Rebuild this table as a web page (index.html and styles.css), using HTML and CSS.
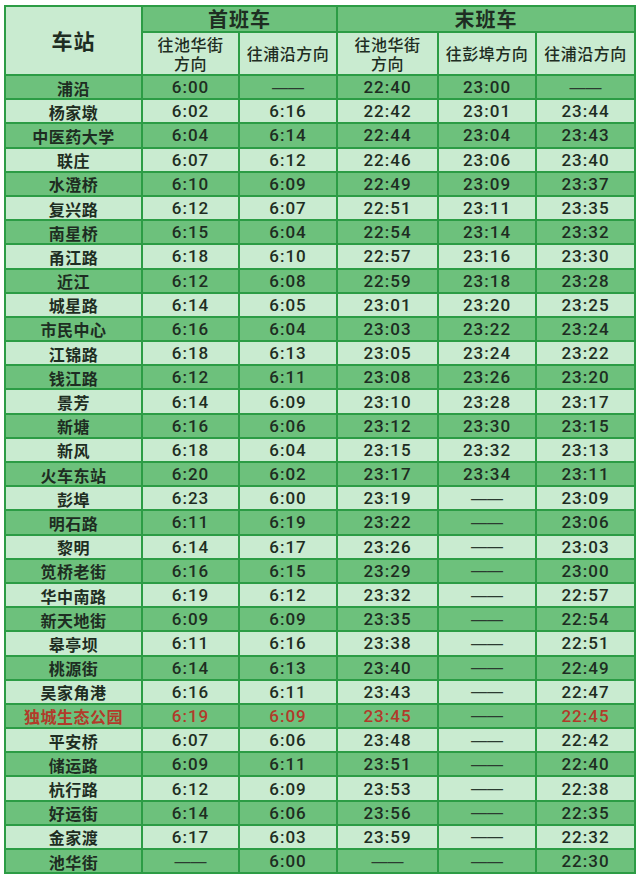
FILE: index.html
```html
<!DOCTYPE html>
<html lang="zh">
<head>
<meta charset="utf-8">
<link rel="stylesheet" href="styles.css">
</head>
<body>
<table class="tt">
  <colgroup>
    <col class="c-st"><col class="c-a"><col class="c-b"><col class="c-c"><col class="c-d"><col class="c-e">
  </colgroup>
  <thead>
    <tr class="h1">
      <th rowspan="2" class="station-h">车站</th>
      <th colspan="2" class="group">首班车</th>
      <th colspan="3" class="group">末班车</th>
    </tr>
    <tr class="h2">
      <th><span class="ln">往池华街</span><span class="ln">方向</span></th>
      <th>往浦沿方向</th>
      <th><span class="ln">往池华街</span><span class="ln">方向</span></th>
      <th>往彭埠方向</th>
      <th>往浦沿方向</th>
    </tr>
  </thead>
  <tbody>
    <tr><td class="st">浦沿</td><td>6:00</td><td class="dash">——</td><td>22:40</td><td>23:00</td><td class="dash">——</td></tr>
    <tr><td class="st">杨家墩</td><td>6:02</td><td>6:16</td><td>22:42</td><td>23:01</td><td>23:44</td></tr>
    <tr><td class="st">中医药大学</td><td>6:04</td><td>6:14</td><td>22:44</td><td>23:04</td><td>23:43</td></tr>
    <tr><td class="st">联庄</td><td>6:07</td><td>6:12</td><td>22:46</td><td>23:06</td><td>23:40</td></tr>
    <tr><td class="st">水澄桥</td><td>6:10</td><td>6:09</td><td>22:49</td><td>23:09</td><td>23:37</td></tr>
    <tr><td class="st">复兴路</td><td>6:12</td><td>6:07</td><td>22:51</td><td>23:11</td><td>23:35</td></tr>
    <tr><td class="st">南星桥</td><td>6:15</td><td>6:04</td><td>22:54</td><td>23:14</td><td>23:32</td></tr>
    <tr><td class="st">甬江路</td><td>6:18</td><td>6:10</td><td>22:57</td><td>23:16</td><td>23:30</td></tr>
    <tr><td class="st">近江</td><td>6:12</td><td>6:08</td><td>22:59</td><td>23:18</td><td>23:28</td></tr>
    <tr><td class="st">城星路</td><td>6:14</td><td>6:05</td><td>23:01</td><td>23:20</td><td>23:25</td></tr>
    <tr><td class="st">市民中心</td><td>6:16</td><td>6:04</td><td>23:03</td><td>23:22</td><td>23:24</td></tr>
    <tr><td class="st">江锦路</td><td>6:18</td><td>6:13</td><td>23:05</td><td>23:24</td><td>23:22</td></tr>
    <tr><td class="st">钱江路</td><td>6:12</td><td>6:11</td><td>23:08</td><td>23:26</td><td>23:20</td></tr>
    <tr><td class="st">景芳</td><td>6:14</td><td>6:09</td><td>23:10</td><td>23:28</td><td>23:17</td></tr>
    <tr><td class="st">新塘</td><td>6:16</td><td>6:06</td><td>23:12</td><td>23:30</td><td>23:15</td></tr>
    <tr><td class="st">新风</td><td>6:18</td><td>6:04</td><td>23:15</td><td>23:32</td><td>23:13</td></tr>
    <tr><td class="st">火车东站</td><td>6:20</td><td>6:02</td><td>23:17</td><td>23:34</td><td>23:11</td></tr>
    <tr><td class="st">彭埠</td><td>6:23</td><td>6:00</td><td>23:19</td><td class="dash">——</td><td>23:09</td></tr>
    <tr><td class="st">明石路</td><td>6:11</td><td>6:19</td><td>23:22</td><td class="dash">——</td><td>23:06</td></tr>
    <tr><td class="st">黎明</td><td>6:14</td><td>6:17</td><td>23:26</td><td class="dash">——</td><td>23:03</td></tr>
    <tr><td class="st">笕桥老街</td><td>6:16</td><td>6:15</td><td>23:29</td><td class="dash">——</td><td>23:00</td></tr>
    <tr><td class="st">华中南路</td><td>6:19</td><td>6:12</td><td>23:32</td><td class="dash">——</td><td>22:57</td></tr>
    <tr><td class="st">新天地街</td><td>6:09</td><td>6:09</td><td>23:35</td><td class="dash">——</td><td>22:54</td></tr>
    <tr><td class="st">皋亭坝</td><td>6:11</td><td>6:16</td><td>23:38</td><td class="dash">——</td><td>22:51</td></tr>
    <tr><td class="st">桃源街</td><td>6:14</td><td>6:13</td><td>23:40</td><td class="dash">——</td><td>22:49</td></tr>
    <tr><td class="st">吴家角港</td><td>6:16</td><td>6:11</td><td>23:43</td><td class="dash">——</td><td>22:47</td></tr>
    <tr class="hl"><td class="st">独城生态公园</td><td>6:19</td><td>6:09</td><td>23:45</td><td class="dash">——</td><td>22:45</td></tr>
    <tr><td class="st">平安桥</td><td>6:07</td><td>6:06</td><td>23:48</td><td class="dash">——</td><td>22:42</td></tr>
    <tr><td class="st">储运路</td><td>6:09</td><td>6:11</td><td>23:51</td><td class="dash">——</td><td>22:40</td></tr>
    <tr><td class="st">杭行路</td><td>6:12</td><td>6:09</td><td>23:53</td><td class="dash">——</td><td>22:38</td></tr>
    <tr><td class="st">好运街</td><td>6:14</td><td>6:06</td><td>23:56</td><td class="dash">——</td><td>22:35</td></tr>
    <tr><td class="st">金家渡</td><td>6:17</td><td>6:03</td><td>23:59</td><td class="dash">——</td><td>22:32</td></tr>
    <tr><td class="st">池华街</td><td class="dash">——</td><td>6:00</td><td class="dash">——</td><td class="dash">——</td><td>22:30</td></tr>
  </tbody>
</table>
</body>
</html>
```
FILE: styles.css
```css
html, body {
  margin: 0;
  padding: 0;
  background: #ffffff;
}
body {
  padding: 5px 0 0 4px;
  font-family: "Roboto", "Noto Sans CJK SC", sans-serif;
  color: #1e2d22;
}
.tt {
  border-collapse: collapse;
  table-layout: fixed;
  width: 630px;
  border: 2px solid #2c9c45;
}
.c-st { width: 137px; }
.c-a { width: 97px; }
.c-b { width: 98px; }
.c-c { width: 101px; }
.c-d { width: 98px; }
.c-e { width: 99px; }

.tt th, .tt td {
  border: 2px solid #2c9c45;
  padding: 0;
  text-align: center;
  vertical-align: middle;
  line-height: 1;
}
.tt th {
  font-family: "Noto Sans CJK SC", sans-serif;
  font-weight: 500;
  background: #c9ebd0;
  color: #1e2d22;
}
.h1 { height: 26px; }
.h2 { height: 43px; }
.h1 .group {
  background: #6dc17c;
  font-size: 20px;
  font-weight: 700;
  letter-spacing: 1px;
}
.station-h {
  font-size: 21px;
  font-weight: 700 !important;
  letter-spacing: 1px;
}
.h2 th {
  font-size: 16px;
  line-height: 19px;
  letter-spacing: 0.5px;
}
.h2 .ln {
  display: block;
  height: 19px;
  line-height: 19px;
}
.tt tbody tr { height: 24.2px; }
.tt tbody tr:nth-child(odd) td { background: #6dc17c; }
.tt tbody tr:nth-child(even) td { background: #c9ebd0; }
.tt td {
  font-size: 17px;
  font-weight: 500;
  letter-spacing: 1px;
  padding-top: 1px;
}
.tt td.st {
  font-family: "Noto Sans CJK SC", sans-serif;
  font-size: 16px;
  font-weight: 700;
  letter-spacing: 0.5px;
}
.tt td.dash {
  font-family: "Liberation Sans", sans-serif;
  font-size: 16px;
  font-weight: 400;
  letter-spacing: 0;
  color: #2b3a30;
}
.hl td { color: #b23a2a; }
.hl td.dash { color: #2b3a30; }
```
